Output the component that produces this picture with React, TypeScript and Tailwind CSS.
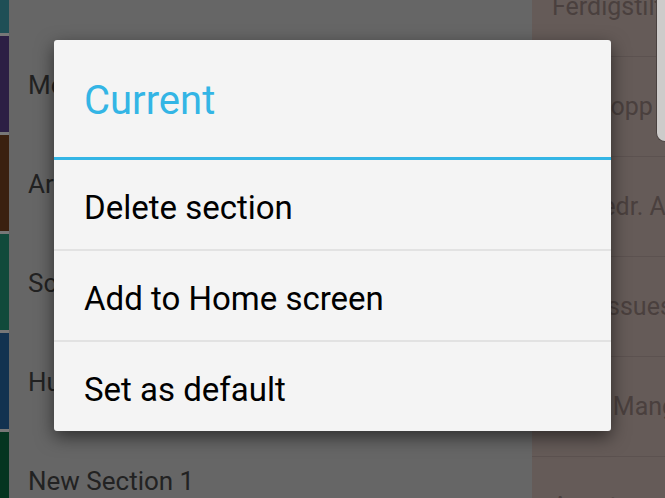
const leftRows = [
  { label: "History", color: "bg-[#1f4f56]" },
  { label: "Meetings", color: "bg-[#2c1f44]" },
  { label: "Archive", color: "bg-[#3a200f]" },
  { label: "School", color: "bg-[#114a3b]" },
  { label: "Human", color: "bg-[#123250]" },
  { label: "New Section 1", color: "bg-[#053520]" },
];

const rightRows = ["Ferdigstilt", "Hold opp", "Forbedr. Arbeid", "Nye issues", "Flere Mangler", "Annet"];

const menuItems = ["Delete section", "Add to Home screen", "Set as default"];

export default function App() {
  return (
    <div
      className="relative w-[665px] h-[498px] overflow-hidden flex bg-[#666666]"
      style={{ fontFamily: "Roboto, 'Noto Sans', sans-serif" }}
    >
      {/* section list */}
      <div className="w-[532px] shrink-0 flex flex-col -mt-[66px]">
        {leftRows.map((r) => (
          <div key={r.label} className="h-[99px] shrink-0 flex">
            <div className="w-[9px] flex flex-col">
              <div className="h-[3px] bg-[#777777]" />
              <div className={`flex-1 ${r.color}`} />
            </div>
            <div className="flex-1 flex items-center pl-[19px] pt-[6px] text-[26px] text-[#222222] whitespace-nowrap">
              {r.label}
            </div>
          </div>
        ))}
      </div>

      {/* page list */}
      <div className="flex-1 min-w-0 bg-[#655b58] flex flex-col -mt-[43px]">
        {rightRows.map((t) => (
          <div
            key={t}
            className="h-[100px] shrink-0 flex items-center pl-[20px] text-[25px] text-[#4a403e] whitespace-nowrap border-b border-[#5c5250]"
          >
            {t}
          </div>
        ))}
      </div>

      {/* edge of another card */}
      <div className="absolute right-0 top-0 w-[9px] h-[142px] bg-[#cdcbca] rounded-bl-[12px] border-l border-b border-[#4a4240]" />

      {/* dialog */}
      <div className="absolute left-[54px] top-[40px] w-[557px] bg-[#f4f4f4] rounded-[3px] shadow-[0_6px_18px_rgba(0,0,0,0.55)]">
        <div className="h-[117px] flex items-center pl-[30px] pt-[4px] text-[40px] text-[#33b5e5]">
          Current
        </div>
        <div className="h-[3px] bg-[#33b5e5]" />
        {menuItems.map((m, i) => (
          <div key={m}>
            {i > 0 && <div className="h-[2px] bg-[#e2e2e2]" />}
            <div className="h-[89px] flex items-center pl-[30px] pt-[6px] text-[33px] text-black">{m}</div>
          </div>
        ))}
      </div>
    </div>
  );
}
